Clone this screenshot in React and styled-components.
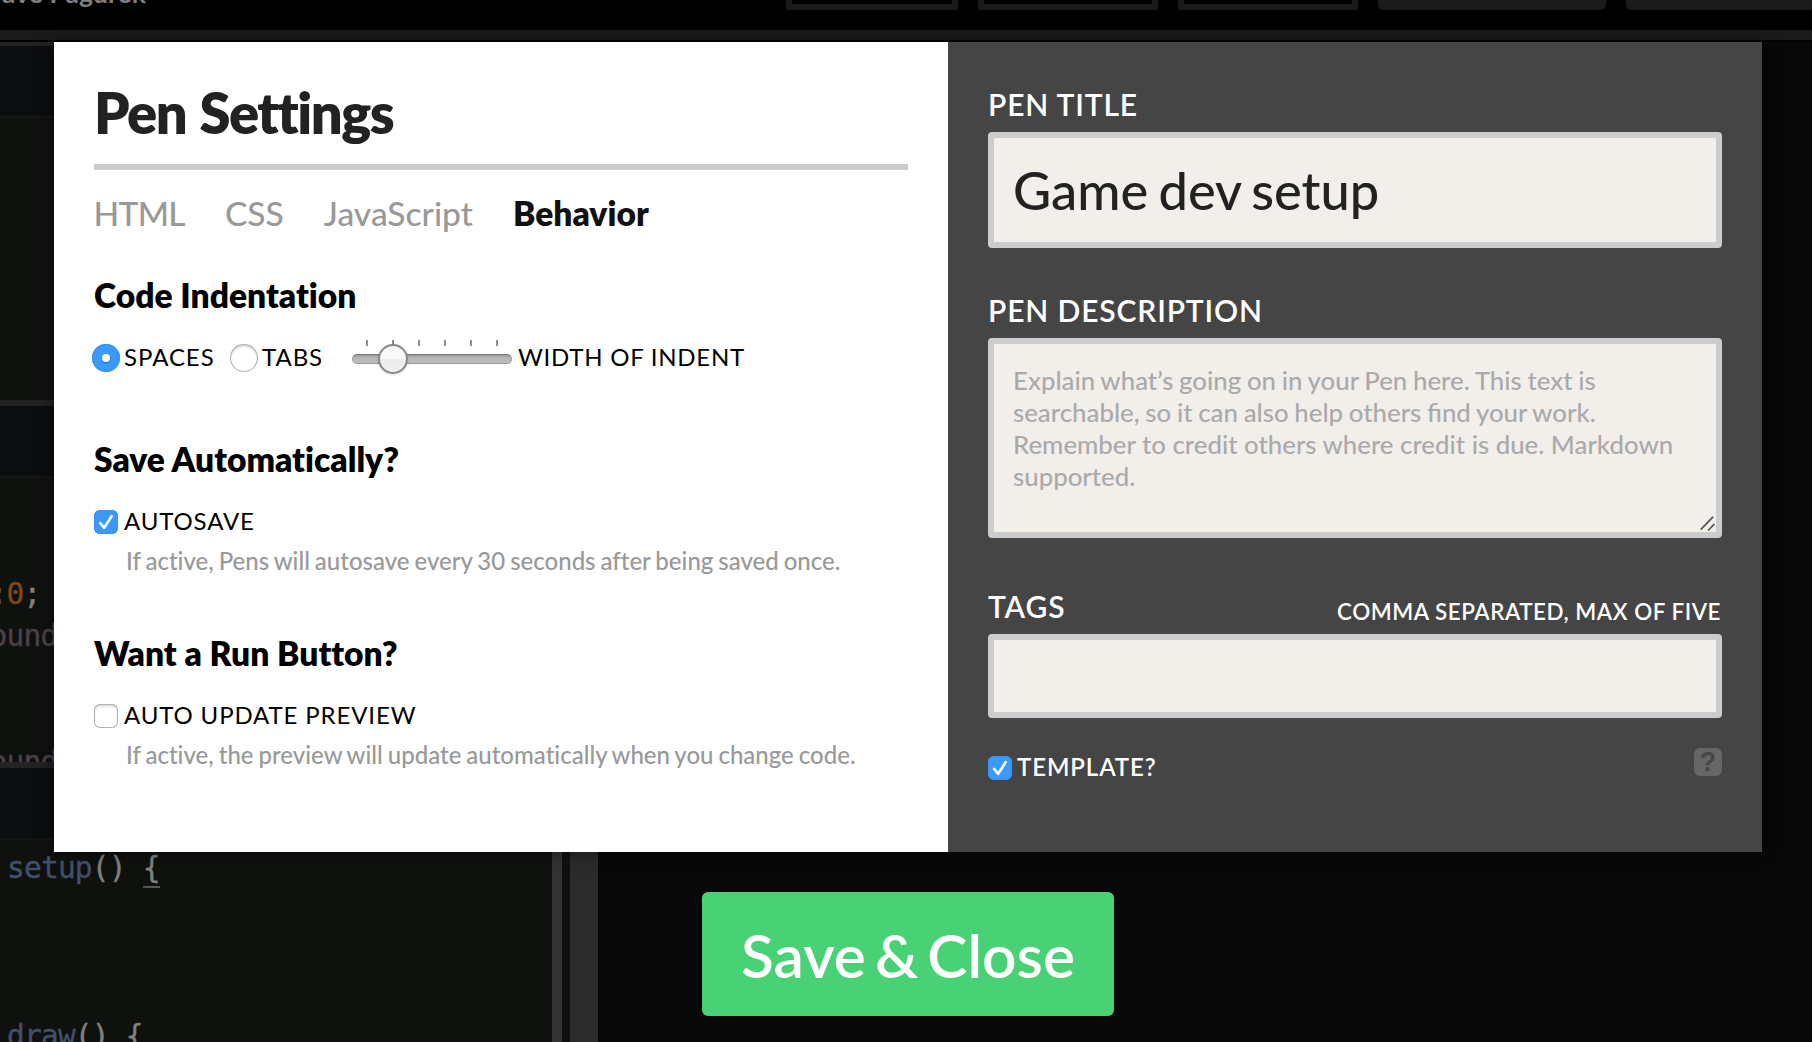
import React from 'react';
import styled, { createGlobalStyle } from 'styled-components';

const GlobalStyle = createGlobalStyle`
  * { box-sizing: border-box; }
  html, body { margin: 0; padding: 0; background: #080808; }
  body { font-family: Lato, "Liberation Sans", sans-serif; overflow: hidden; }
`;

const Page = styled.div`
  position: relative;
  width: 1812px;
  height: 1042px;
  overflow: hidden;
  background: #080808;
`;

/* ---------- dimmed editor behind the dialog ---------- */

const Workspace = styled.div`
  display: flex;
  flex-direction: column;
  height: 100%;
`;

const TopBar = styled.header`
  display: flex;
  justify-content: space-between;
  align-items: flex-start;
  flex: none;
  height: 42px;
  background: linear-gradient(#000 30px, #1a1a1a 30px, #1a1a1a 40px, #020202 40px);
`;

const Author = styled.div`
  margin: -23px 0 0 2px;
  font-size: 26.4px;
  line-height: 32px;
  font-weight: 700;
  letter-spacing: 0.1px;
  color: #808080;
`;

const TopActions = styled.div`
  display: flex;
  gap: 20px;
`;

const TopAction = styled.div`
  width: ${(p) => p.$width}px;
  height: 10px;
  border: 6px solid #1a1a1a;
  border-top: 0;
  border-right-width: ${(p) => (p.$flush ? 0 : 6)}px;
  border-radius: 0 0 ${(p) => (p.$flush ? 0 : p.$radius)}px ${(p) => p.$radius}px;
  background: ${(p) => (p.$filled ? '#1a1a1a' : '#000')};
`;

const Body = styled.div`
  display: flex;
  flex: 1;
  min-height: 0;
`;

const Editors = styled.div`
  display: flex;
  flex-direction: column;
  width: 570px;
`;

const Splitter = styled.div`
  width: 28px;
  background: #2b2b2b;
`;

const Preview = styled.div`
  flex: 1;
  background: #080808;
`;

const Pane = styled.section`
  display: flex;
  flex-direction: column;
  flex: ${(p) => (p.$height ? `0 0 ${p.$height}px` : '1 1 0')};
  min-height: 0;
  border-top: ${(p) => p.$edge}px solid #232323;
`;

const PaneHeader = styled.div`
  flex: none;
  height: 72px;
  background: #0c0d0f;
  border-bottom: 2px solid #151617;
`;

const PaneCode = styled.div`
  display: flex;
  flex: 1;
  min-height: 0;
  overflow: hidden;
  background: #0f110f;
`;

const Lines = styled.div`
  width: 552px;
  margin-top: ${(p) => p.$offset}px;
`;

const ScrollThumb = styled.div`
  width: 10px;
  background: #333;
`;

const Line = styled.div`
  height: 42px;
  margin-left: ${(p) => p.$indent}px;
  font-family: "DejaVu Sans Mono", "Liberation Mono", monospace;
  font-size: 29.5px;
  line-height: 42px;
  letter-spacing: -0.8px;
  white-space: pre;
  -webkit-text-stroke: 0.4px currentColor;
  color: #808080;
`;

const Token = styled.span`
  color: ${(p) => p.$color};
`;

const Bracket = styled.span`
  display: inline-block;
  height: 41px;
  border-bottom: 2px solid #555;
`;

/* ---------- dialog ---------- */

const Overlay = styled.div`
  position: absolute;
  inset: 0;
  display: flex;
  flex-direction: column;
  align-items: center;
  gap: 40px;
  padding: 42px 50px 0 54px;
`;

const Dialog = styled.div`
  display: flex;
  width: 1708px;
  height: 810px;
  box-shadow: 0 0 16px rgba(0, 0, 0, 0.5);
`;

const SettingsPanel = styled.div`
  width: 894px;
  padding: 36px 40px 0;
  background: #fff;
  color: #000;
  font-variant-ligatures: none;
`;

const DetailsPanel = styled.div`
  width: 814px;
  padding: 44px 40px 0;
  background: #454545;
  color: #fff;
`;

const Title = styled.h1`
  margin: 0;
  padding: 0 0 16px 0;
  border-bottom: 6px solid #ccc;
  font-size: 56px;
  line-height: 70px;
  font-weight: 800;
  letter-spacing: -1.5px;
  word-spacing: 2px;
  color: #222;
`;

const Tabs = styled.nav`
  display: flex;
  gap: 40px;
  margin: 23px 0 0 -0.5px;
`;

const Tab = styled.a`
  font-size: 33.6px;
  line-height: 40px;
  font-weight: ${(p) => (p.$active ? 800 : 500)};
  letter-spacing: ${(p) => p.$spacing || 0}px;
  color: ${(p) => (p.$active ? '#111' : '#999')};
`;

const Group = styled.section`
  margin-top: ${(p) => p.$top}px;
`;

const GroupTitle = styled.h3`
  margin: 0 0 ${(p) => p.$gap || 31}px;
  font-size: 33.6px;
  line-height: 40px;
  font-weight: 800;
`;

const Option = styled.label`
  display: flex;
  align-items: flex-start;
  gap: ${(p) => p.$gap || 6}px;
  width: ${(p) => (p.$width ? `${p.$width}px` : 'auto')};
`;

const OptionText = styled.span`
  font-size: 24px;
  line-height: ${(p) => p.$line || 22}px;
  font-weight: ${(p) => p.$weight || 400};
  letter-spacing: ${(p) => p.$spacing || 0.87}px;
  white-space: nowrap;
`;

const Hint = styled.p`
  margin: 11px 0 0 32px;
  font-size: 24px;
  line-height: 32px;
  font-weight: 500;
  word-spacing: -1.1px;
  white-space: nowrap;
  color: #999;
`;

const IndentRow = styled.div`
  display: flex;
  align-items: flex-start;
  height: 28px;
  margin-left: -2px;
`;

const Radio = styled.span`
  display: flex;
  align-items: center;
  justify-content: center;
  flex: none;
  width: 28px;
  height: 28px;
  border-radius: 50%;
  background: ${(p) => (p.$on ? '#3b99fc' : '#fff')};
  box-shadow: ${(p) =>
    p.$on
      ? 'inset 0 0 0 1px #3a93f3'
      : 'inset 0 0 0 1px #b4b4b4, inset 0 2px 3px rgba(0, 0, 0, 0.22)'};
`;

const RadioDot = styled.span`
  width: 8px;
  height: 8px;
  border-radius: 50%;
  background: #fff;
  box-shadow: 0 1px 2px rgba(0, 40, 120, 0.4);
`;

const Box = styled.span`
  flex: none;
  width: 24px;
  height: 24px;
  margin-top: ${(p) => p.$top || 0}px;
  border-radius: 6px;
  background: ${(p) => (p.$on ? '#3b99fc' : '#fff')};
  box-shadow: ${(p) =>
    p.$on
      ? 'inset 0 0 0 1px #3a91f0'
      : 'inset 0 0 0 1px #b4b4b4, inset 0 2px 3px rgba(0, 0, 0, 0.2)'};
`;

const Slider = styled.div`
  position: relative;
  display: flex;
  align-items: center;
  width: 160px;
  height: 30px;
  margin-right: 6px;
`;

const Track = styled.div`
  width: 160px;
  height: 10px;
  border-radius: 5px;
  border: 1px solid #979797;
  border-top-color: #777;
  background: linear-gradient(#989898, #b6b6b6 35%, #bebebe);
`;

const Ticks = styled.div`
  position: absolute;
  left: 14px;
  top: -4px;
  display: flex;
  gap: 24px;
`;

const Tick = styled.span`
  width: 2px;
  height: 6px;
  background: #8e8e8e;
`;

const Thumb = styled.div`
  position: absolute;
  left: 26px;
  top: 0;
  width: 30px;
  height: 30px;
  border-radius: 50%;
  border: 2px solid #868686;
  background: linear-gradient(#fafafa 50%, #ececec 50%, #f0f0f0);
  box-shadow: 0 1px 2px rgba(0, 0, 0, 0.15);
`;

const Field = styled.div`
  margin-top: ${(p) => p.$top || 0}px;
`;

const FieldHead = styled.div`
  display: flex;
  justify-content: space-between;
  align-items: flex-end;
  height: 36px;
  margin-bottom: 10px;
`;

const FieldLabel = styled.span`
  font-size: 30px;
  line-height: 36px;
  font-weight: 600;
  letter-spacing: 0.85px;
`;

const FieldNote = styled.span`
  margin-right: 1px;
  font-size: 22.4px;
  line-height: 25px;
  font-weight: 600;
  letter-spacing: 0.53px;
`;

const TextBox = styled.div`
  position: relative;
  display: flex;
  align-items: center;
  height: ${(p) => p.$height}px;
  padding: 0 20px 0 19px;
  border: 6px solid #ccc;
  border-radius: 4px;
  background: #f2efea;
  font-size: 52.4px;
  line-height: 64px;
  font-weight: 500;
  word-spacing: -3px;
  color: #222;
`;

const TextArea = styled(TextBox)`
  display: block;
  padding: 20px 20px 20px 19px;
  font-size: 25.8px;
  line-height: 32px;
  word-spacing: 0;
  color: #aaa;
`;

const Placeholder = styled.span`
  display: block;
  white-space: nowrap;
  word-spacing: ${(p) => p.$gap || 0}px;
`;

const Grip = styled.svg`
  position: absolute;
  right: 0;
  bottom: 0;
`;

const TemplateRow = styled.div`
  display: flex;
  justify-content: space-between;
  align-items: flex-start;
  margin-top: 30px;
`;

const HelpBadge = styled.span`
  width: 28px;
  height: 28px;
  border-radius: 6px;
  background: #666;
  color: #454545;
  font: 700 27px/28px "Liberation Sans", sans-serif;
  text-align: center;
`;

const SaveButton = styled.button`
  width: 412px;
  height: 124px;
  padding: 1px 0 0;
  border: 0;
  border-radius: 6px;
  background: #48d175;
  color: #fff;
  font-family: inherit;
  font-size: 60.4px;
  font-weight: 600;
  word-spacing: -6px;
`;

const CheckMark = styled.svg`
  display: block;
`;

function Checkbox({ on, top }) {
  return (
    <Box $on={on} $top={top}>
      {on && (
        <CheckMark width="24" height="24" viewBox="0 0 24 24" fill="none">
          <path d="M6.2 13L10.2 17.8L17.6 6.2" stroke="#fff" strokeWidth="2.6" strokeLinecap="round" strokeLinejoin="round" />
        </CheckMark>
      )}
    </Box>
  );
}

const MUTED_BLUE = '#41506a';
const MUTED_PURPLE = '#4d404c';
const MUTED_ORANGE = '#7d4814';

export default function App() {
  return (
    <Page>
      <GlobalStyle />
      <Workspace>
        <TopBar>
          <Author>ave Pagurek</Author>
          <TopActions>
            <TopAction $width={172} $radius={4} />
            <TopAction $width={180} $radius={4} />
            <TopAction $width={180} $radius={4} />
            <TopAction $width={228} $radius={6} $filled />
            <TopAction $width={186} $radius={6} $filled $flush />
          </TopActions>
        </TopBar>
        <Body>
          <Editors>
            <Pane $height={358} $edge={4}>
              <PaneHeader />
              <PaneCode />
            </Pane>
            <Pane $height={362} $edge={6}>
              <PaneHeader />
              <PaneCode>
                <Lines $offset={-31}>
                  <Line $indent={41.5}><Token $color={MUTED_ORANGE}>0</Token></Line>
                  <Line />
                  <Line />
                  <Line $indent={-10.5}>:<Token $color={MUTED_ORANGE}>0</Token>;</Line>
                  <Line $indent={-10.5}><Token $color={MUTED_PURPLE}>ound</Token></Line>
                  <Line />
                  <Line />
                  <Line $indent={-10.5}><Token $color={MUTED_PURPLE}>ound</Token></Line>
                </Lines>
              </PaneCode>
            </Pane>
            <Pane $edge={6}>
              <PaneHeader />
              <PaneCode>
                <Lines $offset={7}>
                  <Line $indent={7}>
                    <Token $color={MUTED_BLUE}>setup</Token>() <Bracket>{'{'}</Bracket>
                  </Line>
                  <Line />
                  <Line />
                  <Line />
                  <Line $indent={7}>
                    <Token $color={MUTED_BLUE}>draw</Token>() {'{'}
                  </Line>
                </Lines>
                <ScrollThumb />
              </PaneCode>
            </Pane>
          </Editors>
          <Splitter />
          <Preview />
        </Body>
      </Workspace>

      <Overlay>
        <Dialog>
          <SettingsPanel>
            <Title>Pen Settings</Title>
            <Tabs>
              <Tab $spacing={-0.7}>HTML</Tab>
              <Tab>CSS</Tab>
              <Tab>JavaScript</Tab>
              <Tab $active>Behavior</Tab>
            </Tabs>

            <Group $top={42}>
              <GroupTitle $gap={29}>Code Indentation</GroupTitle>
              <IndentRow>
                <Option $gap={4} $width={138}>
                  <Radio $on><RadioDot /></Radio>
                  <OptionText $line={26} $spacing={0.95}>SPACES</OptionText>
                </Option>
                <Option $gap={4} $width={122}>
                  <Radio />
                  <OptionText $line={26} $spacing={0.95}>TABS</OptionText>
                </Option>
                <Slider>
                  <Ticks>
                    {[1, 2, 3, 4, 5, 6].map((n) => <Tick key={n} />)}
                  </Ticks>
                  <Track />
                  <Thumb />
                </Slider>
                <OptionText $line={26} $spacing={0.75}>WIDTH OF INDENT</OptionText>
              </IndentRow>
            </Group>

            <Group $top={67}>
              <GroupTitle>Save Automatically?</GroupTitle>
              <Option>
                <Checkbox on />
                <OptionText>AUTOSAVE</OptionText>
              </Option>
              <Hint>If active, Pens will autosave every 30 seconds after being saved once.</Hint>
            </Group>

            <Group $top={56}>
              <GroupTitle>Want a Run Button?</GroupTitle>
              <Option>
                <Checkbox />
                <OptionText>AUTO UPDATE PREVIEW</OptionText>
              </Option>
              <Hint>If active, the preview will update automatically when you change code.</Hint>
            </Group>
          </SettingsPanel>

          <DetailsPanel>
            <Field>
              <FieldHead><FieldLabel>PEN TITLE</FieldLabel></FieldHead>
              <TextBox role="textbox" $height={116}>Game dev setup</TextBox>
            </Field>
            <Field $top={44}>
              <FieldHead><FieldLabel>PEN DESCRIPTION</FieldLabel></FieldHead>
              <TextArea role="textbox" $height={200}>
                <Placeholder $gap={-0.8}>Explain what’s going on in your Pen here. This text is</Placeholder>
                <Placeholder $gap={-0.8}>searchable, so it can also help others find your work.</Placeholder>
                <Placeholder>Remember to credit others where credit is due. Markdown</Placeholder>
                <Placeholder>supported.</Placeholder>
                <Grip width="18" height="18" viewBox="0 0 18 18" stroke="#555" strokeWidth="1.7" strokeLinecap="round">
                  <path d="M3.2 15.2L14.8 3.2M10.6 16L16 10.4" />
                </Grip>
              </TextArea>
            </Field>
            <Field $top={50}>
              <FieldHead>
                <FieldLabel>TAGS</FieldLabel>
                <FieldNote>COMMA SEPARATED, MAX OF FIVE</FieldNote>
              </FieldHead>
              <TextBox role="textbox" $height={84} />
            </Field>
            <TemplateRow>
              <Option $gap={5}>
                <Checkbox on top={8} />
                <OptionText $line={38} $weight={600} $spacing={0.9}>TEMPLATE?</OptionText>
              </Option>
              <HelpBadge>?</HelpBadge>
            </TemplateRow>
          </DetailsPanel>
        </Dialog>
        <SaveButton>Save &amp; Close</SaveButton>
      </Overlay>
    </Page>
  );
}
